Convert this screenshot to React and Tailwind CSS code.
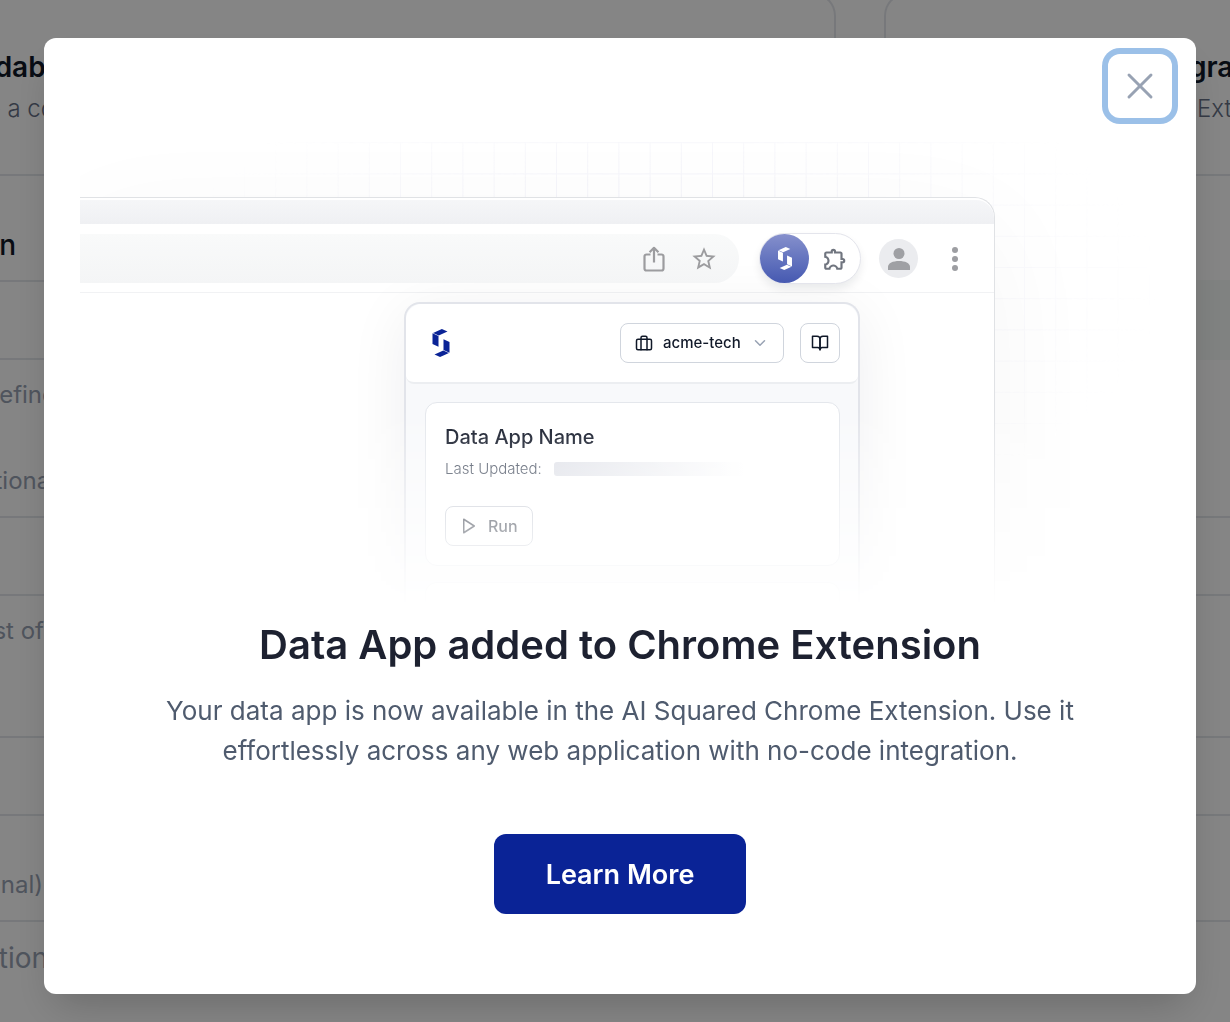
import React from "react";
import { FiBriefcase, FiBookOpen, FiChevronDown, FiPlay } from "react-icons/fi";
import { MdStarOutline, MdOutlineExtension } from "react-icons/md";
import { X } from "lucide-react";

const rows = [
  { height: "h-[106px]", text: "n", style: "w-4 pt-[51px] text-[28px] leading-9 font-medium text-[#101828]" },
  { height: "h-[78px]", tint: true },
  { height: "h-[158px]", text: "efine", second: "tional", style: "w-14 pt-[15px] text-2xl leading-10 text-[#98a2b3]" },
  { height: "h-[78px]" },
  { height: "h-[142px]", text: "st of", style: "w-11 pt-[15px] text-2xl leading-10 text-[#98a2b3]" },
  { height: "h-[78px]" },
  { height: "h-[106px]", text: "nal)", style: "w-[43px] pt-[49px] text-2xl leading-10 text-[#98a2b3]" },
];

function Mark({ className }) {
  return (
    <svg viewBox="0 0 17 28" className={className} fill="currentColor" aria-hidden="true">
      <path d="M.6 4.1 9.4 0 15 2.4 6.2 6.500z" />
      <path d="M0 4.300 6 6.900v10.900L0 15z" />
      <path d="M11 10.200 17 13v10.700l-6-2.600z" />
      <path d="M2 25.600 10.800 21.500l5.600 2.400L7.600 28z" />
    </svg>
  );
}

function ShareIcon() {
  return (
    <svg viewBox="0 0 28 28" className="h-7 w-7" fill="none" stroke="currentColor" strokeWidth="2.2" strokeLinejoin="round" aria-hidden="true">
      <path d="M10.500 9.500H6.500a2 2 0 0 0-2 2v12a2 2 0 0 0 2 2h15a2 2 0 0 0 2-2v-12a2 2 0 0 0-2-2h-4" />
      <path d="M14 17.500V3M9.600 7.300 14 2.800l4.400 4.500" />
    </svg>
  );
}

function BackgroundPage() {
  return (
    <div aria-hidden="true" className="h-full overflow-hidden bg-white">
      <div className="flex h-44 justify-between border-b-2 border-[#e4e7ec]">
        <div className="-mt-2 flex w-[836px] flex-col rounded-tr-3xl border-t-2 border-r-2 border-[#e4e7ec] pt-[53px]">
          <div className="flex w-[53px] justify-end text-[28px] leading-10 font-semibold text-[#101828]">dabl</div>
          <div className="mt-0.5 flex w-[55px] justify-end text-2xl leading-10 font-light whitespace-nowrap text-[#667085]">e a co</div>
        </div>
        <div className="-mt-2 flex w-[346px] flex-col rounded-tl-3xl border-t-2 border-l-2 border-[#e4e7ec] pt-[53px]">
          <div className="ml-[303px] text-[28px] leading-10 font-semibold text-[#101828]">gra</div>
          <div className="mt-0.5 ml-[311px] text-2xl leading-10 font-light text-[#667085]">Ext</div>
        </div>
      </div>
      {rows.map((row, i) => (
        <div key={i} className={`${row.height} flex justify-between border-b-2 border-[#e4e7ec]`}>
          <div className={`flex flex-col items-end whitespace-nowrap ${row.style ?? ""}`}>
            <span>{row.text}</span>
            {row.second && <span className="mt-[46px]">{row.second}</span>}
          </div>
          {row.tint && <div className="-mt-0.5 -mb-0.5 w-[346px] bg-[#f6f9f7]" />}
        </div>
      ))}
      <div className="flex w-12 justify-end pt-4 text-[28px] leading-10 text-[#98a2b3]">tion</div>
    </div>
  );
}

function GridLines() {
  return (
    <svg
      className="absolute inset-0 h-full w-full [mask-image:radial-gradient(ellipse_50%_54%_at_54%_36%,black_10%,transparent_92%)]"
      aria-hidden="true"
    >
      <defs>
        <pattern id="cells" x="8" y="1" width="31.2" height="31.2" patternUnits="userSpaceOnUse">
          <path d="M.5 0v31.200M0 .5h31.200" stroke="#eeeef7" fill="none" />
        </pattern>
      </defs>
      <rect y="32" width="100%" height="100%" fill="url(#cells)" />
    </svg>
  );
}

function Popup() {
  return (
    <div className="mt-[9px] mr-[134px] ml-auto w-[456px] rounded-t-2xl border-2 border-b-0 border-[#e2e4ea] bg-[#f8f9fb] shadow-[0_10px_60px_rgba(16,24,40,0.07)]">
      <div className="flex h-20 items-center rounded-2xl rounded-b-lg border-b-2 border-[#eceef1] bg-white pr-[18px] pl-[26px]">
        <Mark className="h-7 w-[18px] text-[#0a2396]" />
        <button type="button" className="ml-auto flex h-10 w-[164px] items-center rounded-lg border border-[#d0d5dd] pl-[14px] text-[15px] font-medium text-[#101828]">
          <FiBriefcase className="h-[18px] w-[18px]" />
          <span className="ml-[10px]">acme-tech</span>
          <FiChevronDown className="ml-[10px] h-[18px] w-[18px] text-[#98a2b3]" />
        </button>
        <button type="button" aria-label="Documentation" className="ml-4 flex h-10 w-10 items-center justify-center rounded-lg border border-[#d0d5dd] text-[#101828]">
          <FiBookOpen className="h-[18px] w-[18px]" />
        </button>
      </div>
      <div className="mr-[18px] ml-[19px] mt-[18px] h-[164px] rounded-xl border border-[#e4e7ec] bg-white px-[19px] pt-5">
        <h3 className="text-[20px] leading-7 font-medium text-[#0f1525]">Data App Name</h3>
        <div className="mt-1 flex items-center">
          <span className="text-[15px] leading-7 font-light text-[#3f4859]">Last Updated:</span>
          <span className="ml-3 h-[14px] w-[190px] rounded-[3px] bg-linear-to-r from-[#dfe1e8] to-white" />
        </div>
        <button type="button" className="mt-[23px] flex h-10 w-[88px] items-center rounded-lg border border-[#c3c8d2] pl-[14px] text-base font-medium text-[#1d2433]">
          <FiPlay className="h-[18px] w-[18px]" />
          <span className="ml-[10px]">Run</span>
        </button>
      </div>
      <div className="mr-[18px] ml-[19px] mt-4 h-20 rounded-t-xl border border-b-0 border-[#e4e7ec] bg-white" />
    </div>
  );
}

function Illustration() {
  return (
    <div className="relative h-[500px] overflow-hidden pt-[87px] [mask-image:linear-gradient(black_60%,transparent_99%)]">
      <GridLines />
      <div className="relative mr-[165px] h-[480px] rounded-tr-[20px] border-t border-r border-[#e0e2e5] bg-white pt-[2px] shadow-[0_30px_120px_rgba(16,24,40,0.04)]">
        <div className="h-6 rounded-tr-[18px] bg-linear-to-b from-[#f5f6f8] to-[#eff0f3]" />
        <div className="flex h-[69px] items-center border-b border-[#f1f2f4] pt-px pr-9">
          <div className="flex h-[49px] flex-1 items-center justify-end gap-[22px] rounded-r-full bg-linear-to-b from-[#f9fafa] to-[#f4f5f6] pr-[21px] text-[#9c9c9f]">
            <ShareIcon />
            <MdStarOutline className="h-7 w-7" />
          </div>
          <div className="ml-5 flex h-[51px] w-[102px] items-center rounded-full border border-[#e4e5ec] bg-white shadow-[0_5px_8px_rgba(16,24,40,0.08)]">
            <div className="flex h-[49px] w-[49px] items-center justify-center rounded-full bg-linear-to-b from-[#8690cc] to-[#4659b1] text-white">
              <Mark className="h-[23px] w-[14px]" />
            </div>
            <MdOutlineExtension className="ml-[13px] h-[26px] w-[26px] text-[#70757f]" />
          </div>
          <div className="ml-[18px] flex h-[39px] w-[39px] items-center justify-center rounded-full bg-[#ebecef] text-[#9fa0a4]">
            <svg viewBox="0 0 22 22" className="h-[22px] w-[22px]" fill="currentColor" aria-hidden="true">
              <circle cx="11" cy="5.500" r="5.500" />
              <path d="M0 22v-3c0-4 5-6 11-6s11 2 11 6v3z" />
            </svg>
          </div>
          <div className="ml-[34px] flex flex-col gap-[3px]">
            <span className="h-1.5 w-1.5 rounded-full bg-[#9d9ea2]" />
            <span className="h-1.5 w-1.5 rounded-full bg-[#9d9ea2]" />
            <span className="h-1.5 w-1.5 rounded-full bg-[#9d9ea2]" />
          </div>
        </div>
        <Popup />
      </div>
    </div>
  );
}

export default function App() {
  return (
    <main className="h-screen overflow-hidden font-['Inter',sans-serif]">
      <BackgroundPage />
      <div className="fixed inset-0 flex items-start justify-center overflow-hidden bg-black/48 pt-[38px] pl-[10px]">
        <section
          role="dialog"
          aria-modal="true"
          aria-labelledby="dialog-title"
          className="relative w-full max-w-6xl rounded-xl bg-white px-9 pt-[72px] pb-20 text-center shadow-[0_20px_40px_-10px_rgba(0,0,0,0.2)]"
        >
          <button
            type="button"
            aria-label="Close"
            className="absolute top-4 right-6 flex h-16 w-16 items-center justify-center rounded-xl text-[#98a2b3] ring-6 ring-[#9bc0e8]"
          >
            <X size={44} strokeWidth={1.6} />
          </button>
          <div className="text-left">
            <Illustration />
          </div>
          <h1 id="dialog-title" className="mt-[11px] text-[40px] leading-12 font-semibold text-[#1d2130]">
            Data App added to Chrome Extension
          </h1>
          <p className="mx-auto mt-[22px] max-w-[960px] text-[26px] leading-10 text-[#4f5b6e]">
            Your data app is now available in the AI Squared Chrome Extension. Use it
            <br />
            effortlessly across any web application with no-code integration.
          </p>
          <button type="button" className="mt-[63px] h-20 w-[252px] rounded-xl bg-[#0a2396] pt-0.5 text-[27px] font-semibold text-white">
            Learn More
          </button>
        </section>
      </div>
    </main>
  );
}
